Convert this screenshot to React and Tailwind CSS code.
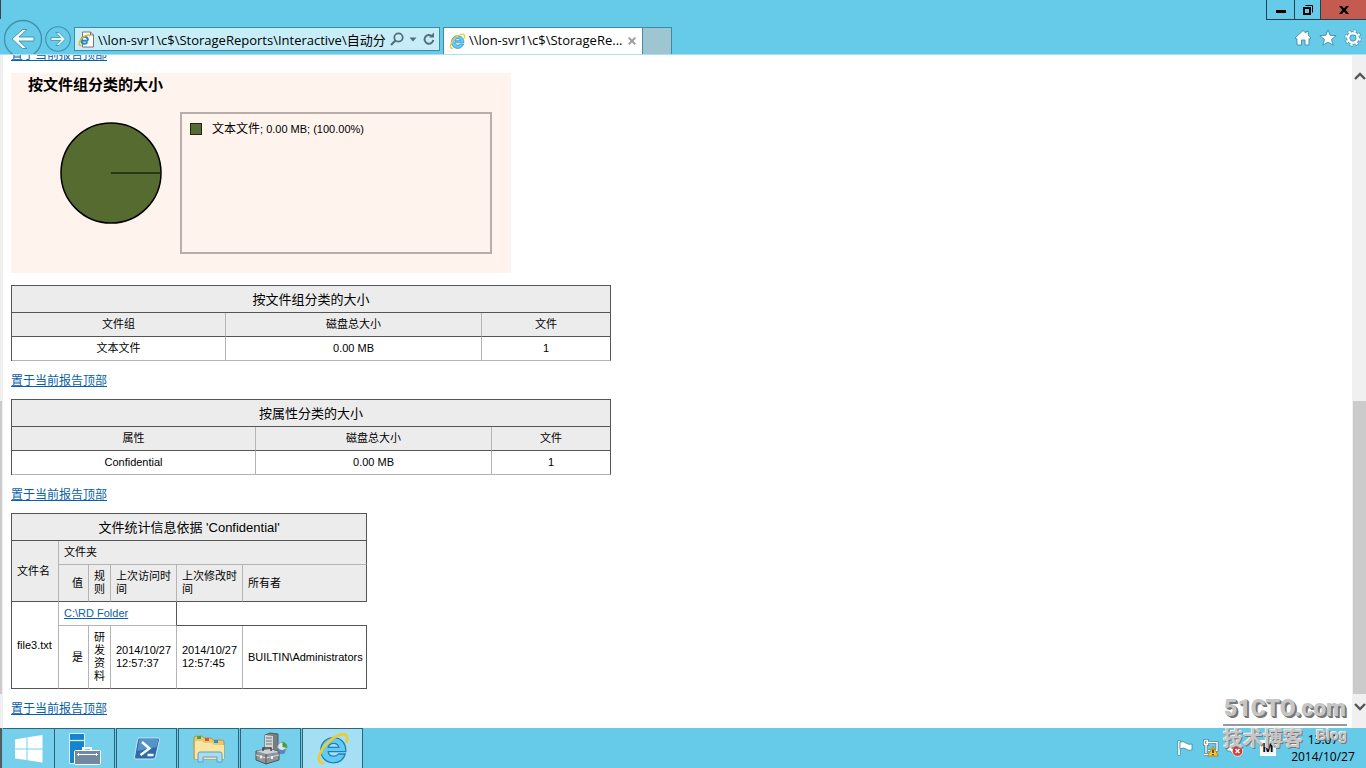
import React from "react";

const tableClass =
  "table-fixed border-separate border-spacing-0 border-l border-t border-[#555] text-[11px] leading-[13px]";
const titleCell =
  "h-[27px] border-b border-r border-[#555] bg-[#ececec] p-0 text-center text-[13px] font-normal";
const headCell = "h-6 border-b border-b-[#555] bg-[#ececec] p-0 text-center font-normal";
const dataCell = "h-6 border-b border-b-[#b4b4b4] p-0 text-center";
const innerEdge = "border-r border-r-[#b4b4b4]";
const outerEdge = "border-r border-r-[#555]";

function TopLink() {
  return (
    <p className="mb-[10px] mt-3 h-4 text-xs leading-4">
      <a href="#top" className="text-[#0a5fa8] underline">置于当前报告顶部</a>
    </p>
  );
}

function SizeTable({ title, columns, row, widths }) {
  return (
    <table className={`${tableClass} w-[600px]`}>
      <colgroup>
        {widths.map((w, i) => (
          <col key={i} className={w} />
        ))}
      </colgroup>
      <thead>
        <tr>
          <th colSpan={3} className={titleCell}>{title}</th>
        </tr>
        <tr>
          {columns.map((c, i) => (
            <th key={i} className={`${headCell} ${i === 2 ? outerEdge : innerEdge}`}>{c}</th>
          ))}
        </tr>
      </thead>
      <tbody>
        <tr>
          {row.map((c, i) => (
            <td key={i} className={`${dataCell} ${i === 2 ? outerEdge : innerEdge}`}>{c}</td>
          ))}
        </tr>
      </tbody>
    </table>
  );
}

const lightBottom = "border-b border-b-[#b4b4b4]";
const darkBottom = "border-b border-b-[#555]";

function StatsTable() {
  return (
    <table className={`${tableClass} w-[356px]`}>
      <colgroup>
        <col className="w-[47px]" />
        <col className="w-[30px]" />
        <col className="w-[22px]" />
        <col className="w-[66px]" />
        <col className="w-[66px]" />
        <col className="w-[124px]" />
      </colgroup>
      <thead className="bg-[#ececec] text-left">
        <tr>
          <th colSpan={6} className={titleCell}>文件统计信息依据 'Confidential'</th>
        </tr>
        <tr>
          <th rowSpan={2} className={`px-[5px] py-0 font-normal ${innerEdge} ${darkBottom}`}>文件名</th>
          <th colSpan={5} className={`h-6 px-[5px] py-0 font-normal ${outerEdge} ${lightBottom}`}>文件夹</th>
        </tr>
        <tr className="h-[37px]">
          <th className={`px-[5px] py-0 text-right font-normal ${innerEdge} ${darkBottom}`}>值</th>
          <th className={`px-[5px] py-0 font-normal ${innerEdge} ${darkBottom}`}>规则</th>
          <th className={`px-[5px] py-0 font-normal ${innerEdge} ${darkBottom}`}>上次访问时间</th>
          <th className={`px-[5px] py-0 font-normal ${innerEdge} ${darkBottom}`}>上次修改时间</th>
          <th className={`px-[5px] py-0 font-normal ${outerEdge} ${darkBottom}`}>所有者</th>
        </tr>
      </thead>
      <tbody>
        <tr>
          <td rowSpan={2} className={`whitespace-nowrap px-[5px] py-0 ${innerEdge} ${darkBottom}`}>file3.txt</td>
          <td colSpan={3} className={`h-6 px-[5px] py-0 ${outerEdge} ${lightBottom}`}>
            <a href="#folder" className="text-[#0a5fa8] underline">C:\RD Folder</a>
          </td>
          <td colSpan={2} className={`p-0 ${darkBottom}`}></td>
        </tr>
        <tr className="h-[63px]">
          <td className={`px-[5px] py-0 text-right ${innerEdge} ${darkBottom}`}>是</td>
          <td className={`px-[5px] py-0 ${innerEdge} ${darkBottom}`}>研发资料</td>
          <td className={`px-[5px] py-0 ${innerEdge} ${darkBottom}`}>2014/10/27 12:57:37</td>
          <td className={`px-[5px] py-0 ${innerEdge} ${darkBottom}`}>2014/10/27 12:57:45</td>
          <td className={`whitespace-nowrap px-[5px] py-0 ${outerEdge} ${darkBottom}`}>BUILTIN\Administrators</td>
        </tr>
      </tbody>
    </table>
  );
}

function IeLogo({ className }) {
  return (
    <svg viewBox="0 0 32 32" className={className} aria-hidden="true">
      <path
        d="M28 18.500H11.500c.2 2.600 2.200 4.300 5.100 4.300 2 0 3.500-.8 4.400-2.100h6.500C26 25.700 22 29 16.500 29 9.500 29 4.500 24 4.500 17.200S9.500 5.300 16.500 5.300c7 0 11.500 5 11.500 12zM11.500 14.400h10c-.4-2.300-2.200-3.800-4.900-3.800s-4.600 1.500-5.100 3.800z"
        fill="#62cbf3"
        stroke="#1f7fb8"
        strokeWidth="1.200"
      />
      <path
        d="M28.500 9.500C30 5.500 29.300 2.500 26.500 2.200 20 1.500 8 10 4 20c-2.300 5.800-1.200 9.600 2.600 9"
        fill="none"
        stroke="#eecb35"
        strokeWidth="2.600"
        strokeLinecap="round"
      />
    </svg>
  );
}

function Header() {
  return (
    <header className="flex h-[55px] shrink-0 justify-between border-b border-[#a9e0f2] bg-[#66cae9]">
      <div className="h-[19px] w-px bg-[#4a3b45]"></div>
      <nav className="flex min-w-0 flex-1 items-start overflow-hidden pt-[19px]">
        <button aria-label="Back" className="ml-[3px] h-[35px] w-[40px] overflow-hidden">
          <svg viewBox="0 0 40 40" className="h-10 w-10" fill="none">
            <circle cx="19" cy="20" r="18.500" stroke="#3f91ab" strokeWidth="1.300" />
            <path d="M8 20 18.500 10.500h4.500l-8 7.500H30v4H15l8 7.500h-4.500z" fill="#eefaff" stroke="#3f91ab" strokeWidth=".9" />
          </svg>
        </button>
        <button aria-label="Forward" className="ml-[1px] mt-[7px] h-[26px] w-[26px]">
          <svg viewBox="0 0 26 26" className="h-[26px] w-[26px]" fill="none">
            <circle cx="13" cy="13" r="12.300" stroke="#3f91ab" strokeWidth="1.100" />
            <path d="m20.500 13-6.500-6.500h-3.200l4.800 5H6v3h9.600l-4.800 5H14z" fill="#e2f6fd" stroke="#3f91ab" strokeWidth=".8" />
          </svg>
        </button>
        <div className="ml-[3px] mt-2 flex h-6 w-[366px] shrink-0 items-center border border-[#3f8ba4] bg-[#c6edf8] pl-[3px] pr-[3px]">
          <svg viewBox="0 0 17 17" className="h-[17px] w-[17px] shrink-0" aria-hidden="true">
            <path d="M4.500 1h8l3 3v12h-11z" fill="#fff" stroke="#777" />
            <path d="M12.500 1v3h3" fill="none" stroke="#777" />
            <path d="M10 9.700H3.500c0 3.600 4.500 3.900 5.800 1.600M3.500 8.700C3.500 4.600 10 4.600 10 9.500" fill="none" stroke="#2788c9" strokeWidth="2" />
            <path d="M11.800 5.500C12 2 4 5 1.500 11c-1 3 .5 4 2 3" fill="none" stroke="#e3b81e" strokeWidth="1.400" />
          </svg>
          <input
            aria-label="Address"
            defaultValue="\\lon-svr1\c$\StorageReports\Interactive\自动分类"
            className="ml-[3px] h-5 w-[288px] shrink-0 bg-transparent p-0 text-[13px] text-black outline-none"
          />
          <button aria-label="Search" className="ml-1">
            <svg viewBox="0 0 14 14" className="h-3.5 w-3.5" fill="none" stroke="#4f6f7a" strokeWidth="1.800">
              <circle cx="8.500" cy="5.500" r="4.200" />
              <path d="M5.500 8.500 1 13" strokeWidth="2.200" />
            </svg>
          </button>
          <button aria-label="Address history" className="ml-[5px]">
            <svg viewBox="0 0 8 5" className="h-[5px] w-2"><path d="M.5.500h7L4 4.500z" fill="#4f6f7a" /></svg>
          </button>
          <button aria-label="Refresh" className="ml-[5px]">
            <svg viewBox="0 0 14 14" className="h-3.5 w-3.5" fill="none" stroke="#4f6f7a" strokeWidth="1.900">
              <path d="M10 4.200A4.400 4.400 0 1 0 11.300 8" />
              <path d="M7 5.500h5V.5z" fill="#4f6f7a" stroke="none" />
            </svg>
          </button>
        </div>
        <div className="ml-[3px] mt-2 flex h-[27px] w-[200px] shrink-0 items-center border border-b-0 border-[#3f8ba4] bg-white pl-[5px] pr-[6px]">
          <IeLogo className="h-[17px] w-[17px] shrink-0" />
          <span className="ml-[3px] flex-1 whitespace-nowrap text-[13px]">\\lon-svr1\c$\StorageRe...</span>
          <button aria-label="Close tab">
            <svg viewBox="0 0 8 8" className="h-2 w-2"><path d="m.7.700 6.600 6.600M7.300.700.700 7.300" stroke="#999" strokeWidth="1.900" /></svg>
          </button>
        </div>
        <button aria-label="New tab" className="mt-2 h-[27px] w-[29px] shrink-0 border border-b-0 border-l-0 border-[#3f8ba4] bg-[#9dc5d2]"></button>
      </nav>
      <div className="flex shrink-0 flex-col items-end">
        <div className="flex h-5 border-b border-l border-[#23424d]">
          <button aria-label="Minimize" className="flex w-[28px] items-center justify-center border-r border-[#23424d]">
            <svg viewBox="0 0 10 10" className="mt-1 h-2.5 w-2.5"><path d="M0 3h10v3H0z" /></svg>
          </button>
          <button aria-label="Restore" className="flex w-[26px] items-center justify-center border-r border-[#23424d]">
            <svg viewBox="0 0 10 10" className="h-2.5 w-2.5" fill="none" stroke="#000">
              <path d="M1 3h6v6H1z" strokeWidth="2" />
              <path d="M2.500.5h7v7" />
            </svg>
          </button>
          <button aria-label="Close" className="flex w-[45px] items-center justify-center bg-[#c35b50]">
            <svg viewBox="0 0 10 8" className="h-2 w-2.5"><path d="M0 0h3l2 2.500L7 0h3L6.700 4 10 8H7L5 5.500 3 8H0l3.300-4z" /></svg>
          </button>
        </div>
        <div className="mr-1 mt-[9px] flex gap-[7px]">
          <button aria-label="Home">
            <svg viewBox="0 0 18 18" className="h-[18px] w-[18px]" fill="#fff" stroke="#3f8ba4" strokeWidth=".9">
              <path d="m9 1.500 3 2.700V2.500h2.300v3.800L17 9l-1.200 1.200-.8-.7V16h-4v-5H7.500v5H3V9.500l-.8.700L1 9z" />
            </svg>
          </button>
          <button aria-label="Favorites">
            <svg viewBox="0 0 18 18" className="h-[18px] w-[18px]" fill="#fff" stroke="#3f8ba4" strokeWidth=".9">
              <path d="m9 .8 2.200 5.500 5.900.4-4.600 3.700 1.600 5.900L9 13l-5.100 3.300 1.600-5.900L.900 6.700l5.900-.4z" />
            </svg>
          </button>
          <button aria-label="Tools">
            <svg viewBox="0 0 18 18" className="h-[18px] w-[18px]">
              <circle cx="9" cy="9" r="6.800" fill="none" stroke="#3f8ba4" strokeWidth="3.400" strokeDasharray="3 2.340" />
              <circle cx="9" cy="9" r="4.700" fill="none" stroke="#3f8ba4" strokeWidth="4" />
              <circle cx="9" cy="9" r="6.800" fill="none" stroke="#fff" strokeWidth="2.200" strokeDasharray="2.400 2.940" strokeDashoffset="-.3" />
              <circle cx="9" cy="9" r="4.700" fill="none" stroke="#fff" strokeWidth="2.500" />
            </svg>
          </button>
        </div>
      </div>
    </header>
  );
}

function ScrollArrow({ down }) {
  return (
    <svg viewBox="0 0 12 8" className="h-2 w-3" fill="none" stroke="#555" strokeWidth="2.400">
      <path d={down ? "m1 1 5 5 5-5" : "m1 7 5-5 5 5"} />
    </svg>
  );
}

const taskButton = "flex w-[61px] items-center justify-center border border-b-0 border-[#2d6477]";

function Taskbar() {
  return (
    <footer className="flex h-10 shrink-0 justify-between bg-[#66cae9]">
      <div className="flex gap-px border-l-2 border-[#4f5d63] pl-px">
        <button aria-label="Start" className="-mr-px flex w-[51px] items-center justify-center border-t border-[#2d6477] bg-[#76d0ec]">
          <svg viewBox="0 0 28 28" className="h-7 w-7" fill="#fff">
            <path d="M0 4.500 11.500 2.500v11H0zM12.500 2.300 27.500 0v13.500h-15zM0 14.500h11.500v10.500L0 23.500zM12.500 14.500h15V27.500l-15-2.300z" />
          </svg>
        </button>
        <button aria-label="Server Manager" className={`${taskButton} bg-[#76d0ec]`}>
          <svg viewBox="0 0 34 34" className="h-[34px] w-[34px]">
            <path d="M1.500 1.500h15v30h-15z" fill="#1683cf" stroke="#d8f1fb" />
            <path d="M2 8.500h14" stroke="#d8f1fb" strokeWidth="1.300" />
            <path d="M15 19v-3h8v3" fill="none" stroke="#fff" strokeWidth="2" />
            <rect x="6.500" y="18.500" width="26" height="14" rx="1" fill="#7089a0" stroke="#fff" />
            <path d="M9 22.500h21M10.500 21v3M28.500 21v3" stroke="#fff" />
          </svg>
        </button>
        <button aria-label="PowerShell" className={`${taskButton} bg-[#76d0ec]`}>
          <svg viewBox="0 0 28 24" className="h-6 w-7">
            <path d="M6 1h19q2 0 1.500 2l-4 17q-.5 2-2.500 2H3q-2 0-1.500-2l3-17Q5 1 6 1z" fill="#2c6ca8" stroke="#c9e6f5" />
            <path d="M7 2h17q1.500 0 1.200 1.500L23.500 10 4.500 14 6 3q.3-1 1-1z" fill="#5594c8" />
            <path d="m9 5 7.500 6.500L7.500 18M14.500 18h6" fill="none" stroke="#fff" strokeWidth="2.400" />
          </svg>
        </button>
        <button aria-label="File Explorer" className={`${taskButton} bg-[#76d0ec]`}>
          <svg viewBox="0 0 34 30" className="h-[30px] w-[34px]">
            <path d="M2 25V4q0-2 2-2h6l2 2h7l2 2h9q2 0 2 2v17z" fill="#e8c871" stroke="#b8943f" />
            <path d="M3 25V7h7l2 2h8l2 2h10v14z" fill="#f9e6a2" />
            <path d="M5 2h4v3H5z" fill="#49a349" />
            <path d="M13 4h4v3h-4z" fill="#d65434" />
            <path d="M22 6h4v3h-4z" fill="#3b8cc9" />
            <path d="M6 28v-8q0-2 2-2h20q2 0 2 2v8h-5v-5H11v5z" fill="#a9dcf3" stroke="#5a9fc5" />
          </svg>
        </button>
        <button aria-label="Server Tools" className={`${taskButton} bg-[#76d0ec]`}>
          <svg viewBox="0 0 34 34" className="h-[34px] w-[34px]">
            <path d="m11 3 5-2 8 1v19l-4 2-9-2z" fill="#777d82" stroke="#565c60" />
            <path d="m11 3 8 1v18l-8-1z" fill="#d3d6d8" />
            <path d="M12 6h6M12 9h6M12 12h6" stroke="#777" />
            <circle cx="28.500" cy="15" r="4.800" fill="#dfe6ea" stroke="#8ea3ad" />
            <path d="M28.500 15v-5a5 5 0 0 1 4.500 6z" fill="#3aa33f" />
            <path d="M24 16q4 4 8 0l-1 5q-4 3-7-1z" fill="#5a87bd" />
            <path d="m2 19 14-2 9 3v8l-13 4-10-4z" fill="#8d959a" stroke="#4c5357" />
            <path d="m2 19 10 3 13-2-9-3z" fill="#cdd1d3" />
            <path d="M9 19v-3h8v3" fill="none" stroke="#444" strokeWidth="1.500" />
            <path d="m2 23 10 3 13-3" fill="none" stroke="#d6dadc" />
            <path d="M12 22v10" stroke="#4c5357" />
            <path d="M6 23.500h2v3H6zM17 24h2v3h-2z" fill="#eee" />
          </svg>
        </button>
        <button aria-label="Internet Explorer" className={`${taskButton} bg-[#a5dff3]`}>
          <IeLogo className="h-[34px] w-[34px]" />
        </button>
      </div>
      <div className="flex items-center pr-[9px]">
        <div className="flex items-center gap-[7px]">
          <svg viewBox="0 0 18 18" className="h-[18px] w-[18px]" aria-label="Action Center">
            <path d="M3 1.500v15" stroke="#44849a" strokeWidth="3" />
            <path d="M3 2v14" stroke="#fff" strokeWidth="1.700" />
            <path d="M4 3q4-1 6 1t6 1v6q-4 1-6-1t-6 0z" fill="#fff" stroke="#44849a" strokeWidth=".8" />
          </svg>
          <svg viewBox="0 0 18 18" className="h-[18px] w-[18px]" aria-label="Network">
            <path d="M5 3.500h11v8H7M3.500 1.500v4h3v-4zM5 5.500V14M3 15.500h7" fill="none" stroke="#35606f" strokeWidth="2.600" />
            <path d="M5 3.500h11v8H7M3.500 1.500v4h3v-4zM5 5.500V14M3 15.500h7" fill="none" stroke="#fff" strokeWidth="1.500" />
            <path d="m12 7.500 5.500 9.500h-11z" fill="#fcc52e" stroke="#b37a0d" strokeWidth=".8" />
            <path d="M12 10.500v3.500M12 15v1.200" stroke="#222" strokeWidth="1.400" />
          </svg>
          <svg viewBox="0 0 18 18" className="h-[18px] w-[18px]" aria-label="Volume muted">
            <path d="M1 6h3l5-4v14l-5-4H1z" fill="#fff" stroke="#44849a" strokeWidth=".8" />
            <circle cx="11.500" cy="12" r="5.300" fill="#d93a32" stroke="#fff" strokeWidth=".7" />
            <path d="m9.500 10 4 4m0-4-4 4" stroke="#fff" strokeWidth="1.500" />
          </svg>
        </div>
        <div className="ml-[16px] flex h-4 w-4 items-center justify-center border-2 border-white bg-[#eef4f6] text-xs font-bold leading-3">M</div>
        <time className="ml-[13px] w-[68px] whitespace-nowrap text-center text-xs leading-[17px]">
          13:07
          <br />
          2014/10/27
        </time>
      </div>
    </footer>
  );
}

function Watermark() {
  return (
    <div className="pointer-events-none absolute bottom-4 right-[19px] w-[124px] text-[#c6c6c6]">
      <div className="whitespace-nowrap border-b-2 border-[#999] text-center font-['Roboto','Liberation_Sans',sans-serif] text-[23px] font-black leading-[30px] [text-shadow:1px_1px_0_#777,2px_2px_0_#777]">
        51CTO.com
      </div>
      <div className="flex items-start justify-between leading-[26px]">
        <span className="text-[20px] font-bold [text-shadow:1px_1px_0_#777,-1px_-1px_0_#eee]">技术博客</span>
        <span className="font-['Liberation_Sans'] text-[14px] font-bold leading-[18px] [text-shadow:1px_1px_0_#777,-1px_-1px_0_#eee]">Blog</span>
      </div>
    </div>
  );
}

export default function App() {
  return (
    <div className="relative flex h-screen flex-col overflow-hidden bg-white font-['Open_Sans','Noto_Sans_CJK_SC',sans-serif] text-black">
      <Header />
      <div className="flex min-h-0 flex-1">
        <div className="flex w-[3px] flex-col justify-end bg-[#efefef] pb-[34px]">
          <div className="h-[293px] w-0.5 bg-[#cbcbcb]"></div>
        </div>
        <main className="min-w-0 flex-1 overflow-hidden pl-2 font-['Liberation_Sans','Noto_Sans_CJK_SC',sans-serif]">
          <div className="-mt-[20px] flow-root">
            <TopLink />
            <section className="h-[200px] w-[500px] bg-[#fff3ee] pl-[17px] pr-[19px] pt-[3px]">
              <h2 className="text-[15px] font-bold leading-[18px]">按文件组分类的大小</h2>
              <div className="mt-[18px] flex justify-between">
                <svg viewBox="0 0 104 104" className="ml-[31px] mt-[9px] h-[104px] w-[104px]" aria-label="100%">
                  <circle cx="52" cy="52" r="50" fill="#556b2f" stroke="#000" strokeWidth="1.500" />
                  <path d="M52 52h50" stroke="#1c260c" strokeWidth="1.500" />
                </svg>
                <div className="flex h-[142px] w-[312px] items-start border-2 border-[#b7aeab] pl-2 pt-[7px]">
                  <span className="mt-0.5 h-3 w-3 border border-[#222] bg-[#556b2f]"></span>
                  <span className="ml-[10px] text-xs leading-4">
                    文本文件<span className="text-[11px]">; 0.00 MB; (100.00%)</span>
                  </span>
                </div>
              </div>
            </section>
            <div className="mt-3">
              <SizeTable
                title="按文件组分类的大小"
                columns={["文件组", "磁盘总大小", "文件"]}
                row={["文本文件", "0.00 MB", "1"]}
                widths={["w-[214px]", "w-[256px]", "w-[129px]"]}
              />
            </div>
            <TopLink />
            <SizeTable
              title="按属性分类的大小"
              columns={["属性", "磁盘总大小", "文件"]}
              row={["Confidential", "0.00 MB", "1"]}
              widths={["w-[244px]", "w-[236px]", "w-[119px]"]}
            />
            <TopLink />
            <StatsTable />
            <TopLink />
          </div>
        </main>
        <div className="flex w-[14px] flex-col items-end bg-[#f0f0f0] pb-[17px] pt-[17px]">
          <button aria-label="Scroll up"><ScrollArrow /></button>
          <div className="mb-[9px] mt-auto h-[293px] w-[13px] bg-[#cbcbcb]"></div>
          <button aria-label="Scroll down"><ScrollArrow down /></button>
        </div>
      </div>
      <Taskbar />
      <Watermark />
    </div>
  );
}
